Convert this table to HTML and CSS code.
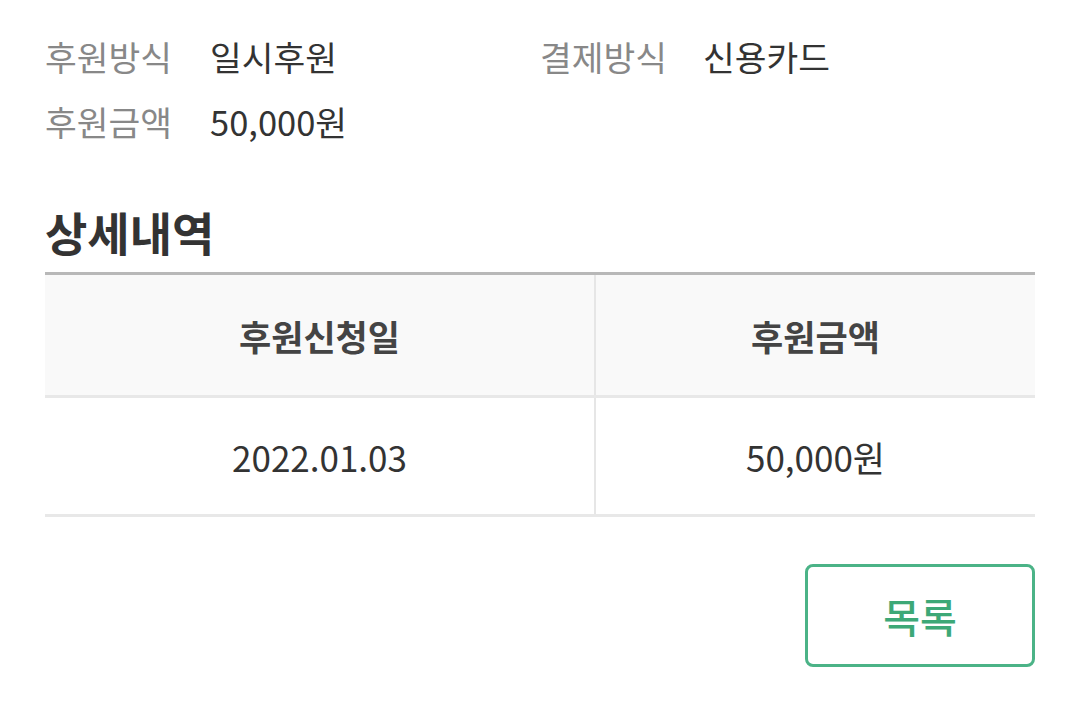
FILE: index.html
```html
<!DOCTYPE html>
<html lang="ko">
<head>
<meta charset="utf-8">
<link rel="stylesheet" href="styles.css">
</head>
<body>
<main class="page">
  <section class="info">
    <div class="info-item"><span class="label">후원방식</span><span class="value">일시후원</span></div>
    <div class="info-item"><span class="label">결제방식</span><span class="value">신용카드</span></div>
    <div class="info-item"><span class="label">후원금액</span><span class="value">50,000원</span></div>
  </section>
  <h2 class="title">상세내역</h2>
  <table class="detail">
    <colgroup><col class="c1"><col class="c2"></colgroup>
    <thead>
      <tr><th>후원신청일</th><th>후원금액</th></tr>
    </thead>
    <tbody>
      <tr><td>2022.01.03</td><td>50,000원</td></tr>
    </tbody>
  </table>
  <div class="actions">
    <button class="btn-list" type="button">목록</button>
  </div>
</main>
</body>
</html>
```

FILE: styles.css
```css
* { box-sizing: border-box; }
html, body { margin: 0; padding: 0; background: #fff; }
body {
  font-family: "Noto Sans CJK KR", "Noto Sans", sans-serif;
  color: #333;
}
.page {
  padding: 24px 45px 0 45px;
}
.info {
  display: grid;
  grid-template-columns: 495px 1fr;
}
.info-item {
  display: flex;
  font-size: 34.5px;
  line-height: 65px;
}
.label {
  width: 165px;
  color: #888;
  flex: none;
}
.info-item:nth-child(2) .label { width: 163px; }
.value { color: #333; }
.title {
  margin: 52px 0 16px 0;
  font-size: 46px;
  line-height: 50px;
  font-weight: 700;
  color: #333;
}
.detail {
  width: 990px;
  border-collapse: collapse;
  border-top: 3px solid #b8b8b8;
  table-layout: fixed;
}
.c1 { width: 550px; }
.detail th, .detail td {
  text-align: center;
  font-size: 35px;
  border-bottom: 3px solid #e8e8e8;
}
.detail th + th, .detail td + td { border-left: 2px solid #e6e6e6; }
.detail th {
  height: 123px;
  background: #f9f9f9;
  font-weight: 700;
  color: #444;
  padding: 0;
}
.detail td {
  height: 119px;
  color: #333;
  padding: 0;
}
.actions {
  display: flex;
  justify-content: flex-end;
  margin-top: 47px;
}
.btn-list {
  width: 230px;
  height: 103px;
  border: 3px solid #4bb387;
  border-radius: 8px;
  background: #fff;
  color: #3da877;
  font-family: "Noto Sans CJK KR", "Noto Sans", sans-serif;
  font-size: 40px;
  font-weight: 500;
  padding: 0;
}
```
